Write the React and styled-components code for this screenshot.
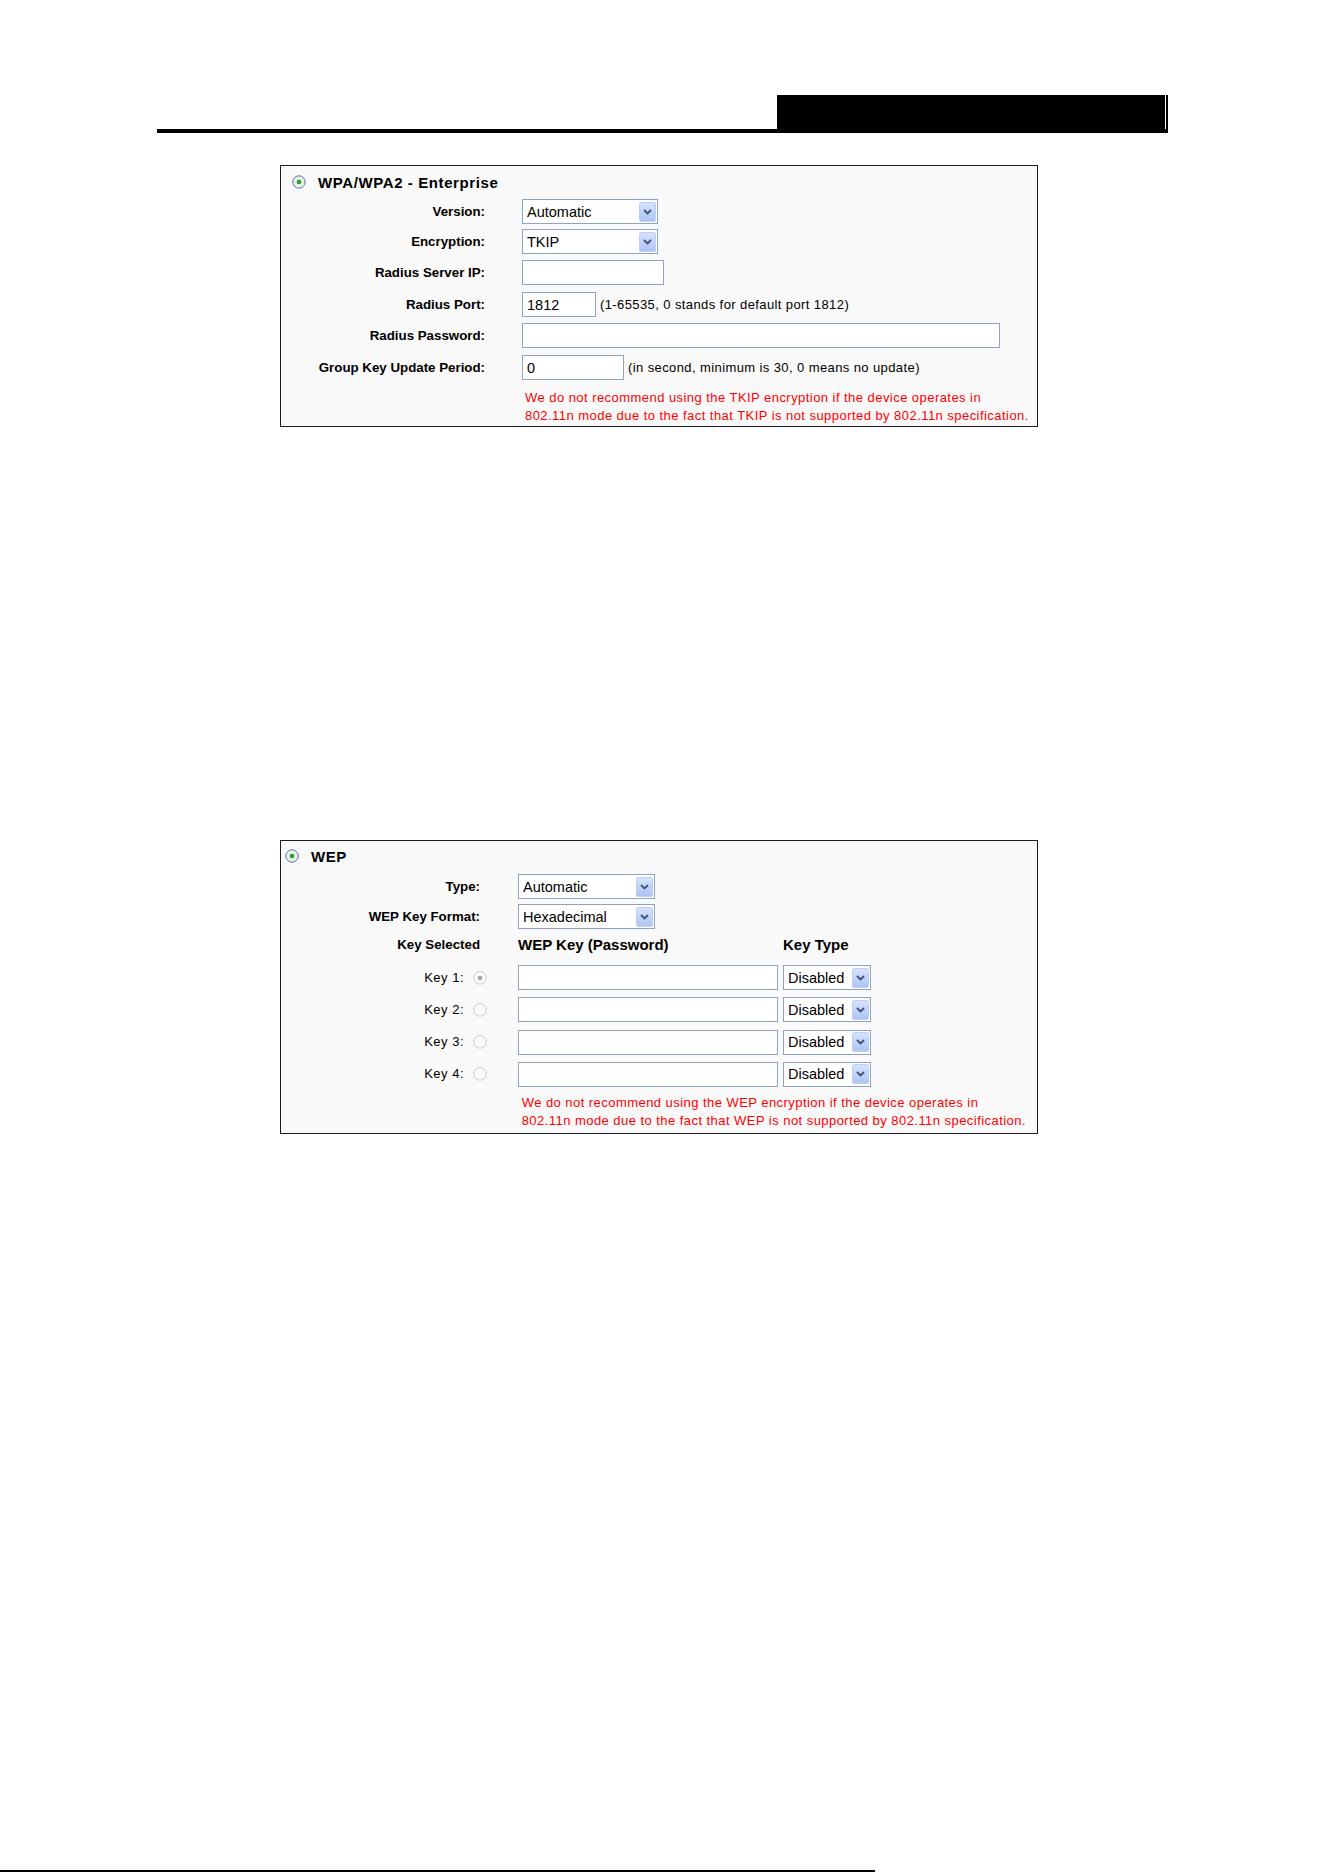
import React from 'react'
import styled, { createGlobalStyle } from 'styled-components'

const font = '"Liberation Sans", Arial, Helvetica, sans-serif'

const GlobalStyle = createGlobalStyle`
  html, body {
    margin: 0;
    padding: 0;
    background: #fff;
  }
  body {
    font-family: ${font};
    color: #000;
  }
`

const Page = styled.div`
  width: 1324px;
  height: 1872px;
  box-sizing: border-box;
  padding-top: 95px;
  display: flex;
  flex-direction: column;
  overflow: hidden;
`

const Header = styled.header`
  width: 1011px;
  margin-left: 157px;
  display: flex;
  flex-direction: column;
`

const HeaderTab = styled.div`
  align-self: flex-end;
  width: 391px;
  height: 34px;
  background: #000;
  box-shadow: inset -2px 0 0 #000, inset -3px 0 0 #fff;
`

const HeaderRule = styled.div`
  height: 4px;
  background: #000;
`

const Panel = styled.section`
  width: 758px;
  height: ${p => p.$h}px;
  box-sizing: border-box;
  margin: ${p => p.$top}px 0 0 280px;
  padding-top: ${p => p.$pt}px;
  border: 1px solid #1a1a1a;
  background: #f9f9f9;
`

const TitleRow = styled.div`
  display: flex;
  align-items: center;
  gap: 12px;
  height: 20px;
  padding-left: ${p => p.$indent}px;
`

const Title = styled.span`
  font-size: 15px;
  font-weight: bold;
  letter-spacing: 0.6px;
`

const FormRow = styled.div`
  display: flex;
  align-items: center;
  min-height: ${p => p.$h || 25}px;
  margin-top: ${p => p.$mt}px;
`

const Label = styled.div`
  width: ${p => p.$w}px;
  margin-right: ${p => p.$gap}px;
  flex-shrink: 0;
  display: flex;
  justify-content: flex-end;
  align-items: center;
  gap: 9px;
  font-size: 13.3px;
  font-weight: bold;
  line-height: 16px;
`

const KeyName = styled.span`
  font-size: 13px;
  font-weight: normal;
  letter-spacing: 0.5px;
`

const Controls = styled.div`
  display: flex;
  align-items: center;
  gap: ${p => p.$gap || 4}px;
`

const ColumnHead = styled.div`
  width: ${p => p.$w}px;
  font-size: 15px;
  font-weight: bold;
  line-height: 18px;
`

const SelectBox = styled.div`
  width: ${p => p.$w}px;
  height: 25px;
  box-sizing: border-box;
  border: 1px solid #8ea3bf;
  background: #fff;
  display: flex;
  align-items: center;
  justify-content: space-between;
  padding: 0 1px 0 4px;
  font-size: 14.5px;
`

const DropButton = styled.span`
  width: 17px;
  height: 20px;
  box-sizing: border-box;
  border: 1px solid #bccff8;
  border-radius: 2px;
  background: linear-gradient(#d6e2fc, #aec4f2);
  display: flex;
  align-items: center;
  justify-content: center;
`

const TextBox = styled.input`
  width: ${p => p.$w}px;
  height: 25px;
  box-sizing: border-box;
  margin: 0;
  border: 1px solid #8ea3bf;
  background: #fff;
  padding: 0 4px;
  font-family: ${font};
  font-size: 14.5px;
  color: #000;
  outline: none;
`

const Hint = styled.span`
  font-size: 13px;
  letter-spacing: 0.4px;
`

const Warning = styled.p`
  margin: ${p => p.$mt}px 0 0 ${p => p.$ml}px;
  color: #ff0000;
  font-size: 13px;
  letter-spacing: 0.45px;
  line-height: 17.5px;
`

const FooterRule = styled.div`
  margin-top: auto;
  width: 875px;
  height: 2px;
  background: #000;
`

const Radio = ({ checked, disabled }) => {
  const stroke = disabled ? '#c8c8c0' : '#4f77a6'
  const fill = disabled ? '#fbfbfb' : '#efefe9'
  const dot = disabled ? '#a4a4a0' : '#22a32a'
  return (
    <svg width="14" height="14" viewBox="0 0 14 14">
      <circle cx="7" cy="7" r="6.2" fill={fill} stroke={stroke} strokeWidth="1" />
      {checked && <circle cx="7" cy="7" r="2.3" fill={dot} />}
    </svg>
  )
}

const Select = ({ w, value }) => (
  <SelectBox $w={w}>
    <span>{value}</span>
    <DropButton>
      <svg width="9" height="6" viewBox="0 0 9 6">
        <polyline points="1,1 4.5,4.5 8,1" fill="none" stroke="#3f557f" strokeWidth="1.9" />
      </svg>
    </DropButton>
  </SelectBox>
)

const Field = ({ w, value }) => <TextBox $w={w} readOnly defaultValue={value || ''} />

const wpaLabel = { $w: 204, $gap: 37 }
const wepLabel = { $w: 199, $gap: 38 }
const keyLabel = { $w: 206, $gap: 31 }

const keys = [1, 2, 3, 4]

export default function App() {
  return (
    <Page>
      <GlobalStyle />
      <Header>
        <HeaderTab />
        <HeaderRule />
      </Header>

      <Panel $top={32} $h={262} $pt={6}>
        <TitleRow $indent={11}>
          <Radio checked />
          <Title>WPA/WPA2 - Enterprise</Title>
        </TitleRow>
        <FormRow $mt={7}>
          <Label {...wpaLabel}>Version:</Label>
          <Select w={136} value="Automatic" />
        </FormRow>
        <FormRow $mt={5}>
          <Label {...wpaLabel}>Encryption:</Label>
          <Select w={136} value="TKIP" />
        </FormRow>
        <FormRow $mt={6}>
          <Label {...wpaLabel}>Radius Server IP:</Label>
          <Field w={142} />
        </FormRow>
        <FormRow $mt={7}>
          <Label {...wpaLabel}>Radius Port:</Label>
          <Controls>
            <Field w={74} value="1812" />
            <Hint>(1-65535, 0 stands for default port 1812)</Hint>
          </Controls>
        </FormRow>
        <FormRow $mt={6}>
          <Label {...wpaLabel}>Radius Password:</Label>
          <Field w={478} />
        </FormRow>
        <FormRow $mt={7}>
          <Label {...wpaLabel}>Group Key Update Period:</Label>
          <Controls>
            <Field w={102} value="0" />
            <Hint>(in second, minimum is 30, 0 means no update)</Hint>
          </Controls>
        </FormRow>
        <Warning $mt={9} $ml={244}>
          We do not recommend using the TKIP encryption if the device operates in
          <br />
          802.11n mode due to the fact that TKIP is not supported by 802.11n specification.
        </Warning>
      </Panel>

      <Panel $top={413} $h={294} $pt={5}>
        <TitleRow $indent={4}>
          <Radio checked />
          <Title>WEP</Title>
        </TitleRow>
        <FormRow $mt={8}>
          <Label {...wepLabel}>Type:</Label>
          <Select w={137} value="Automatic" />
        </FormRow>
        <FormRow $mt={5}>
          <Label {...wepLabel}>WEP Key Format:</Label>
          <Select w={137} value="Hexadecimal" />
        </FormRow>
        <FormRow $mt={5} $h={21}>
          <Label {...wepLabel}>Key Selected</Label>
          <ColumnHead $w={265}>WEP Key (Password)</ColumnHead>
          <ColumnHead $w={88}>Key Type</ColumnHead>
        </FormRow>
        {keys.map(k => (
          <FormRow key={k} $mt={k === 1 ? 10 : 7.3}>
            <Label {...keyLabel}>
              <KeyName>Key {k}:</KeyName>
              <Radio checked={k === 1} disabled />
            </Label>
            <Controls $gap={5}>
              <Field w={260} />
              <Select w={88} value="Disabled" />
            </Controls>
          </FormRow>
        ))}
        <Warning $mt={7.6} $ml={240.7}>
          We do not recommend using the WEP encryption if the device operates in
          <br />
          802.11n mode due to the fact that WEP is not supported by 802.11n specification.
        </Warning>
      </Panel>

      <FooterRule />
    </Page>
  )
}
